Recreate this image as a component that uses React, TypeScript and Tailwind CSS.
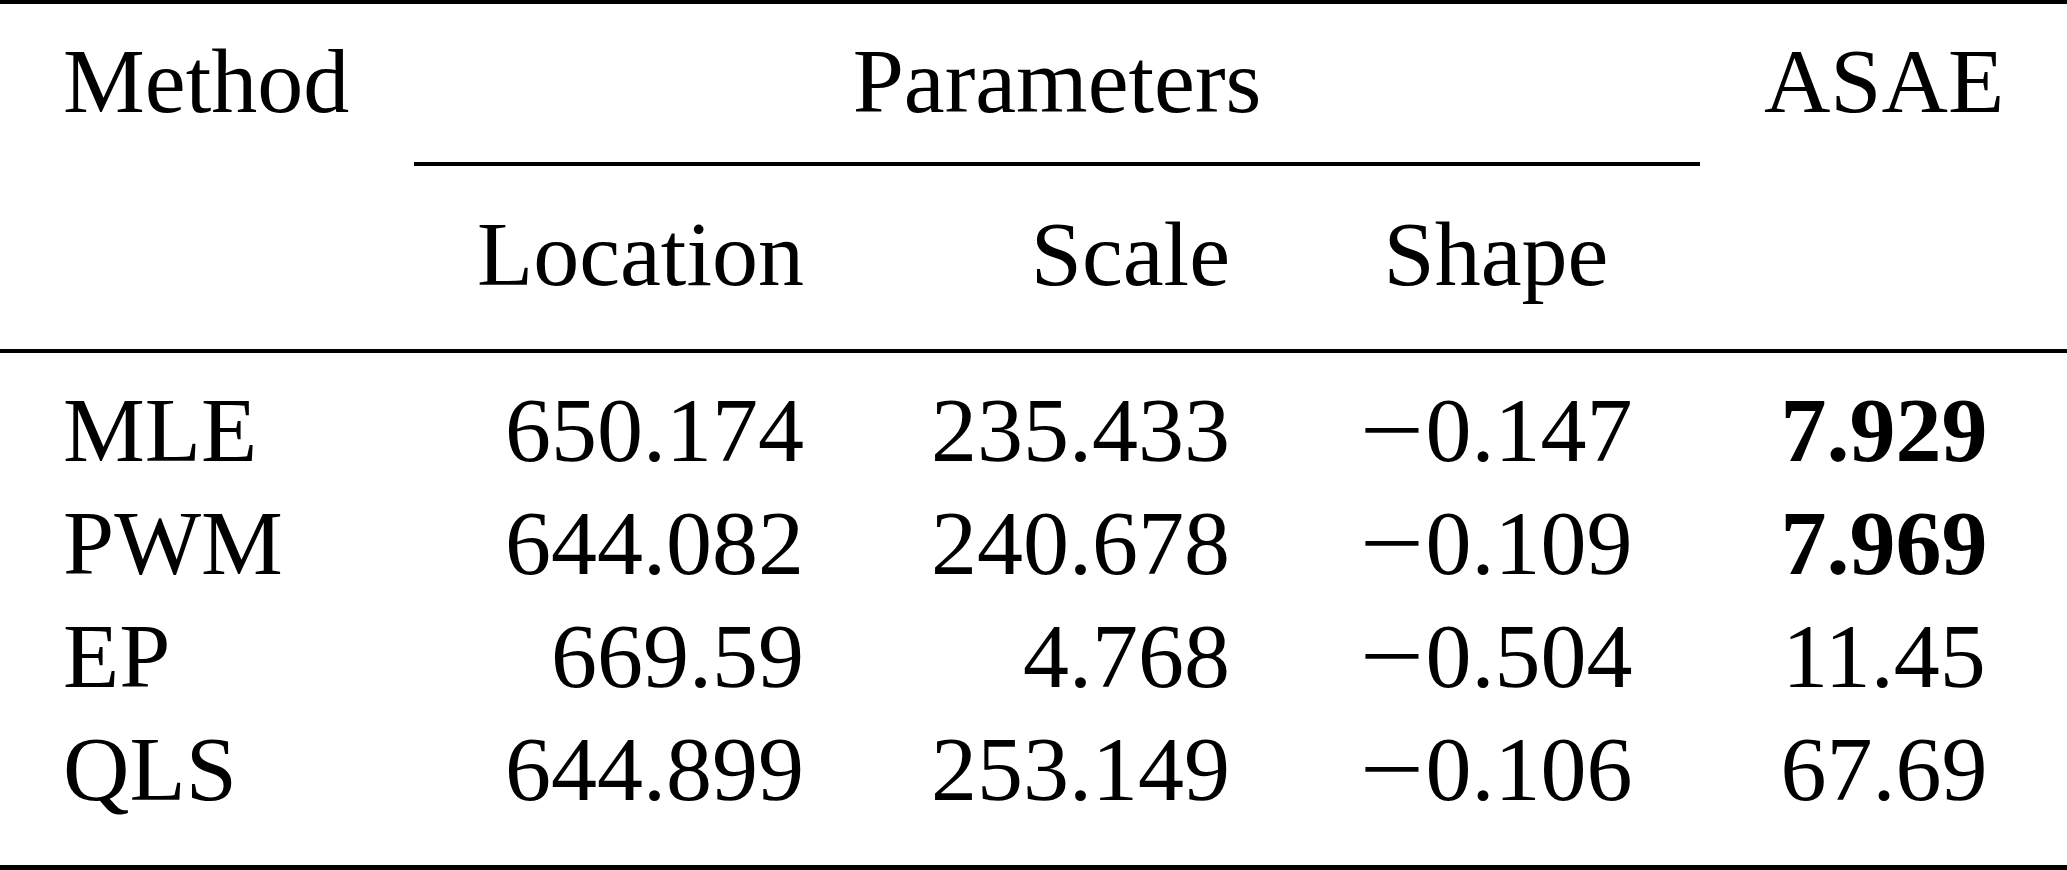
import React from "react";

const GRID = "grid grid-cols-[410px_420px_426px_480px_296px_35px]";

type Row = { m: string; loc: string; sc: string; sh: string; asae: string; bold?: boolean };

const rows: Row[] = [
  { m: "MLE", loc: "650.174", sc: "235.433", sh: "0.147", asae: "7.929", bold: true },
  { m: "PWM", loc: "644.082", sc: "240.678", sh: "0.109", asae: "7.969", bold: true },
  { m: "EP", loc: "669.59", sc: "4.768", sh: "0.504", asae: "11.45" },
  { m: "QLS", loc: "644.899", sc: "253.149", sh: "0.106", asae: "67.69" },
];

function Neg({ v }: { v: string }) {
  return (
    <span>
      <span className="inline-block w-[66px] origin-left scale-x-[1.24] text-left">−</span>
      {v}
    </span>
  );
}

export default function App() {
  return (
    <div className="w-[2067px] h-[870px] bg-white text-black font-['Liberation_Serif',serif] text-[92px] leading-[113px] flex flex-col overflow-hidden">
      <div className="h-[4px] bg-black" />
      <div className={`${GRID} pt-[21px]`}>
        <div className="pl-[63px]">Method</div>
        <div className="col-span-3 pl-[4px] pr-[36px] text-center">Parameters</div>
        <div className="text-center">ASAE</div>
      </div>
      <div className={`${GRID} mt-[24px]`}>
        <div className="col-start-2 col-span-3 ml-[4px] mr-[36px] h-[4px] bg-black" />
      </div>
      <div className={`${GRID} mt-[32px]`}>
        <div />
        <div className="text-right pr-[26px]">Location</div>
        <div className="text-right pr-[26px]">Scale</div>
        <div className="text-center">Shape</div>
        <div />
      </div>
      <div className="h-[4px] bg-black mt-[38px]" />
      <div className="flex flex-col pt-[21px]">
        {rows.map((r) => (
          <div key={r.m} className={GRID}>
            <div className="pl-[63px]">{r.m}</div>
            <div className="text-right pr-[26px]">{r.loc}</div>
            <div className="text-right pr-[26px]">{r.sc}</div>
            <div className="text-center">
              <Neg v={r.sh} />
            </div>
            <div className={`text-center ${r.bold ? "font-bold" : ""}`}>{r.asae}</div>
          </div>
        ))}
      </div>
      <div className="h-[5px] bg-black mt-[39px]" />
    </div>
  );
}
